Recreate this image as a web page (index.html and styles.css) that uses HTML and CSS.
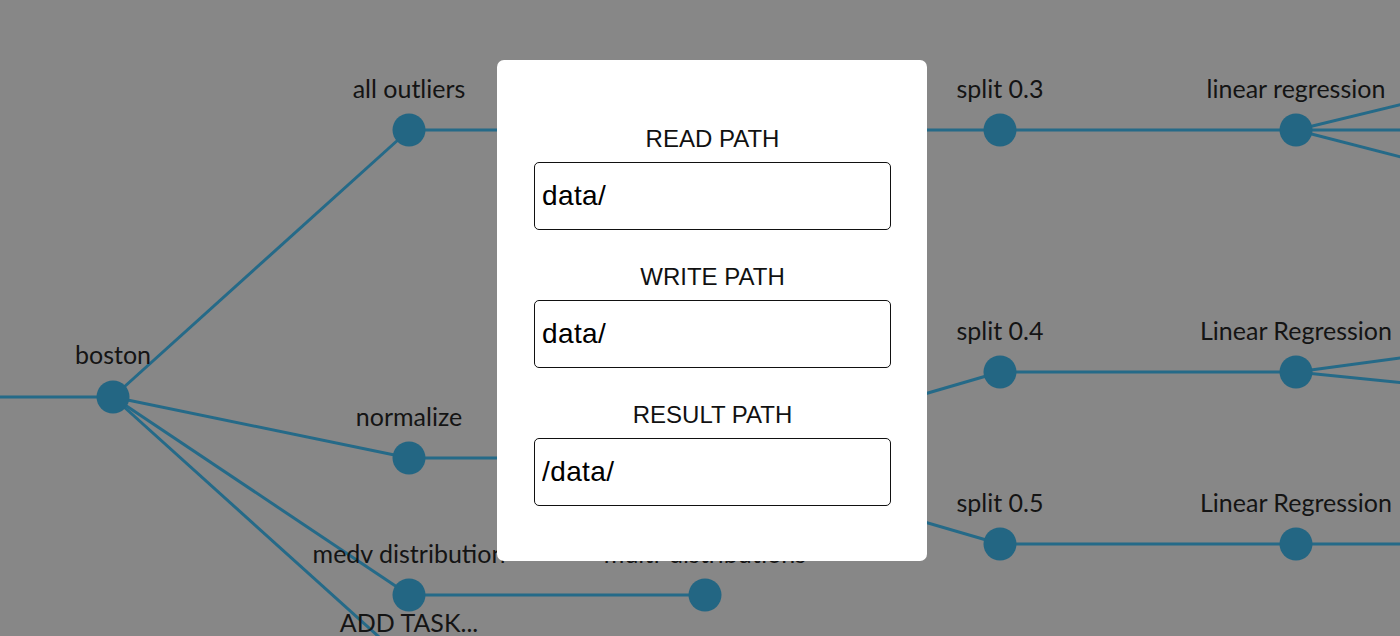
FILE: index.html
```html
<!DOCTYPE html>
<html lang="en">
<head>
    <meta charset="UTF-8">
    <meta name="viewport" content="width=device-width, initial-scale=1.0">
    <title>Pipeline Paths</title>
    <link rel="stylesheet" href="styles.css">
</head>
<body>
    <div class="canvas">
        <!-- task tree, drawn behind the settings dialog -->
        <svg class="tree" width="1400" height="636" viewBox="0 0 1400 636">
            <g class="links">
                <line x1="-200" y1="397" x2="113" y2="397"/>
                <line x1="113" y1="397" x2="409" y2="130"/>
                <line x1="113" y1="397" x2="409" y2="458"/>
                <line x1="113" y1="397" x2="409" y2="595"/>
                <line x1="113" y1="397" x2="409" y2="664"/>
                <line x1="409" y1="130" x2="705" y2="130"/>
                <line x1="409" y1="458" x2="705" y2="458"/>
                <line x1="409" y1="595" x2="705" y2="595"/>
                <line x1="705" y1="130" x2="1000" y2="130"/>
                <line x1="705" y1="458" x2="1000" y2="372"/>
                <line x1="705" y1="458" x2="1000" y2="544"/>
                <line x1="1000" y1="130" x2="1296" y2="130"/>
                <line x1="1000" y1="372" x2="1296" y2="372"/>
                <line x1="1000" y1="544" x2="1296" y2="544"/>
                <line x1="1296" y1="130" x2="1592" y2="58"/>
                <line x1="1296" y1="130" x2="1592" y2="130"/>
                <line x1="1296" y1="130" x2="1592" y2="206"/>
                <line x1="1296" y1="372" x2="1592" y2="332"/>
                <line x1="1296" y1="372" x2="1592" y2="402"/>
                <line x1="1296" y1="544" x2="1592" y2="544"/>
            </g>
            <g class="nodes">
                <circle cx="113" cy="397" r="16.5"/>
                <circle cx="409" cy="130" r="16.5"/>
                <circle cx="409" cy="458" r="16.5"/>
                <circle cx="409" cy="595" r="16.5"/>
                <circle cx="409" cy="664" r="16.5"/>
                <circle cx="705" cy="130" r="16.5"/>
                <circle cx="705" cy="458" r="16.5"/>
                <circle cx="705" cy="595" r="16.5"/>
                <circle cx="1000" cy="130" r="16.5"/>
                <circle cx="1000" cy="372" r="16.5"/>
                <circle cx="1000" cy="544" r="16.5"/>
                <circle cx="1296" cy="130" r="16.5"/>
                <circle cx="1296" cy="372" r="16.5"/>
                <circle cx="1296" cy="544" r="16.5"/>
            </g>
            <g class="labels">
                <text x="113" y="364">boston</text>
                <text x="409" y="98">all outliers</text>
                <text x="409" y="426">normalize</text>
                <text x="409" y="563">medv distribution</text>
                <text x="409" y="632">ADD TASK...</text>
                <text x="705" y="563">multi-distributions</text>
                <text x="1000" y="98">split 0.3</text>
                <text x="1000" y="340">split 0.4</text>
                <text x="1000" y="512">split 0.5</text>
                <text x="1296" y="98">linear regression</text>
                <text x="1296" y="340">Linear Regression</text>
                <text x="1296" y="512">Linear Regression</text>
            </g>
        </svg>

        <div class="modal">
            <form id="path-form">
                <div class="form-group">
                    <label for="read-path">READ PATH</label>
                    <input type="text" id="read-path" name="read-path" value="data/">
                </div>
                <div class="form-group">
                    <label for="write-path">WRITE PATH</label>
                    <input type="text" id="write-path" name="write-path" value="data/">
                </div>
                <div class="form-group">
                    <label for="result-path">RESULT PATH</label>
                    <input type="text" id="result-path" name="result-path" value="/data/">
                </div>
            </form>
        </div>
    </div>
</body>
</html>
```

FILE: styles.css
```css
body {
    margin: 0;
    background-color: #878787;
    font-family: "Liberation Sans", Arial, sans-serif;
}
.canvas {
    position: relative;
    width: 1400px;
    height: 636px;
    overflow: hidden;
}
.tree {
    display: block;
}
.tree .links line {
    stroke: #256a88;
    stroke-width: 3;
}
.tree .nodes circle {
    fill: #236683;
}
.tree .labels text {
    font-family: Lato, "Noto Sans", sans-serif;
    font-size: 25px;
    fill: #141414;
    text-anchor: middle;
}

/* dialog lies over the tree */
.modal {
    position: absolute;
    left: 497px;
    top: 60px;
    width: 430px;
    height: 501px;
    box-sizing: border-box;
    padding: 67px 36px 0 37px;
    background-color: #fff;
    border-radius: 7px;
}
.form-group {
    display: flex;
    flex-direction: column;
    align-items: center;
    gap: 11px;
    margin-bottom: 35px;
}
.form-group label {
    font-size: 24px;
    line-height: 24px;
    color: #111;
}
.form-group input[type="text"] {
    width: 357px;
    height: 68px;
    padding: 0 7px;
    border: 1.5px solid #111;
    border-radius: 5px;
    box-sizing: border-box;
    font-family: "Liberation Sans", Arial, sans-serif;
    font-size: 28px;
    letter-spacing: 0.4px;
    color: #000;
    background: #fff;
    outline: none;
}
```
